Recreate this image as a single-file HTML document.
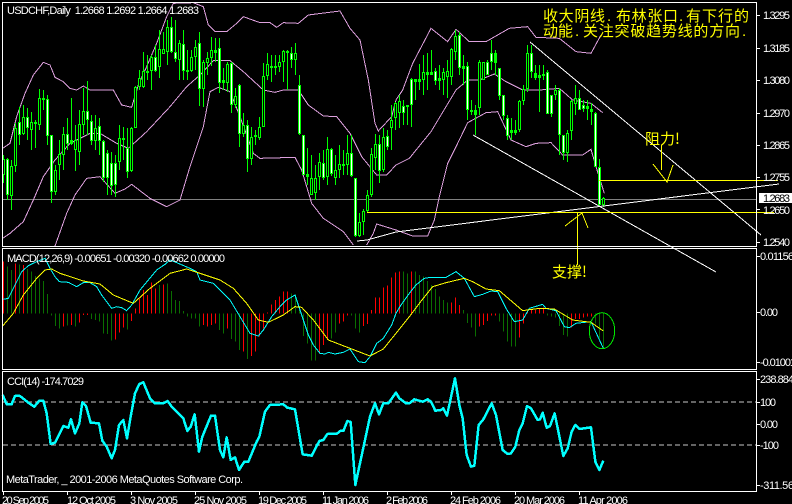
<!DOCTYPE html>
<html><head><meta charset="utf-8">
<style>
html,body{margin:0;padding:0;background:#000;width:792px;height:504px;overflow:hidden}
svg{display:block}
text{font-family:"Liberation Sans",sans-serif;font-size:11px;fill:#fff}
.c{font-family:"WenQuanYi Zen Hei","Noto Sans CJK SC",sans-serif;font-size:15px;fill:#ff0}
.d{font-size:15px;fill:#ff0}
.l{fill:none;stroke-width:3}
</style></head><body>
<svg width="792" height="504" viewBox="0 0 792 504" shape-rendering="crispEdges">
<rect width="792" height="504" fill="#000"/>

<!-- grey price line -->
<path d="M3 199.5H756" stroke="#808080" fill="none"/>

<!-- MACD histogram -->
<g transform="translate(0,245) scale(.33333)" fill="none" stroke-width="3">
<path stroke="#ff0000" d="M10.5 205V50M46.5 205V55M70.5 205V60M190.5 205V245M214.5 205V240M238.5 205V232M250.5 205V210M262.5 205V210M346.5 205V283M358.5 205V262M370.5 205V248M394.5 205V228M406.5 205V190M418.5 205V160M430.5 205V135M442.5 205V150M454.5 205V113M466.5 205V130M490.5 205V118M610.5 205V240M622.5 205V245M634.5 205V240M646.5 205V235M682.5 205V250M730.5 205V320M754.5 205V333M766.5 205V320M778.5 205V275M790.5 205V250M802.5 205V202M814.5 205V178M826.5 205V165M838.5 205V155M850.5 205V140M862.5 205V140M958.5 205V325M970.5 205V300M982.5 205V285M1018.5 205V235M1030.5 205V230M1042.5 205V212M1090.5 205V243M1102.5 205V237M1114.5 205V195M1126.5 205V158M1138.5 205V158M1150.5 205V128M1162.5 205V122M1174.5 205V97M1186.5 205V82"/>
<path stroke="#0a6e00" d="M22.5 205V65M34.5 205V75M58.5 205V58M82.5 205V72M94.5 205V80M106.5 205V93M118.5 205V100M130.5 205V108M142.5 205V147M154.5 205V212M166.5 205V243M178.5 205V250M202.5 205V242M226.5 205V245M274.5 205V222M286.5 205V225M298.5 205V230M310.5 205V265M322.5 205V267M334.5 205V287M382.5 205V253M478.5 205V120M502.5 205V115M514.5 205V138M526.5 205V165M538.5 205V168M550.5 205V198M562.5 205V215M574.5 205V220M586.5 205V220M598.5 205V245M658.5 205V255M670.5 205V265M694.5 205V282M706.5 205V290M718.5 205V315M742.5 205V342M874.5 205V145M886.5 205V148M898.5 205V195M910.5 205V273M922.5 205V295M934.5 205V347M946.5 205V347M994.5 205V280M1006.5 205V262M1054.5 205V212M1066.5 205V250M1078.5 205V262"/>
</g>
<g transform="translate(396,245) scale(.33333)" fill="none" stroke-width="3">
<path stroke="#ff0000" d="M10.5 205V80M46.5 205V80M166.5 205V172M178.5 205V158M190.5 205V180M250.5 205V245M262.5 205V240M274.5 205V228M286.5 205V212M298.5 205V212M370.5 205V278M382.5 205V235M394.5 205V198M406.5 205V195M418.5 205V195M430.5 205V190M442.5 205V187M526.5 205V248M538.5 205V222M550.5 205V222M562.5 205V217M574.5 205V215M586.5 205V215"/>
<path stroke="#0a6e00" d="M22.5 205V80M34.5 205V85M58.5 205V80M70.5 205V90M82.5 205V95M94.5 205V108M106.5 205V120M118.5 205V132M130.5 205V155M142.5 205V165M154.5 205V172M202.5 205V195M214.5 205V234M226.5 205V248M238.5 205V275M310.5 205V230M322.5 205V260M334.5 205V290M346.5 205V305M358.5 205V305M454.5 205V212M466.5 205V215M478.5 205V218M490.5 205V243M502.5 205V270M514.5 205V275M598.5 205V235M610.5 205V280M622.5 205V310"/>
</g>

<!-- Bollinger bands -->
<g transform="scale(.33333)" class="l" stroke="#dda0dd">
<polyline class="l" points="8,445 30,430 50,350 75,280 100,225 130,187 150,195 165,232 190,245 210,265 230,270 250,258 270,270 340,270 365,315 395,322 415,255 440,200 470,130 500,50 520,10 580,8 610,20 625,75 645,95 680,95 710,70 730,50 780,68 810,68 830,82 850,68 895,70 925,45 1020,33 1050,85 1080,120 1105,240 1125,370 1135,393 1175,350 1188,300 1208,270 1238,190 1293,85 1343,125 1368,88 1408,125 1458,125 1528,85 1583,80 1608,112 1678,115 1728,155 1773,160 1803,105"/>
<polyline class="l" points="8,715 30,700 70,665 100,600 130,530 165,480 210,430 270,400 300,400 350,430 385,445 440,395 510,320 560,260 600,225 640,182 690,182 730,215 790,270 825,277 850,270 895,270 925,315 970,348 1010,350 1050,400 1085,470 1130,525 1160,525 1188,495 1228,475 1293,395 1338,320 1368,270 1403,240 1438,240 1483,222 1518,245 1568,270 1618,270 1678,265 1718,300 1773,310 1808,338"/>
<polyline class="l" points="165,738 200,640 225,585 260,535 300,530 345,580 375,567 395,553 450,595 500,620 540,600 570,500 610,380 630,275 655,262 690,275 720,350 760,460 780,475 885,472 905,510 935,610 970,655 1030,695 1060,735"/>
<polyline class="l" points="1100,735 1120,700 1130,672 1188,690 1238,708 1283,708 1303,660 1318,590 1343,490 1373,430 1403,368 1458,338 1493,335 1533,420 1578,440 1608,430 1653,428 1688,465 1748,465 1773,448 1788,500 1813,580"/>
</g>

<!-- candles -->
<g fill="none">
<path stroke="#00ff00" d="M3.5 155V183M7.5 158V200M11.5 160V210M15.5 123V172M19.5 107V145M23.5 105V135M27.5 108V140M31.5 112V150M35.5 120V148M39.5 89V130M43.5 90V110M47.5 95V145M51.5 135V203M55.5 165V195M59.5 140V180M63.5 127V170M67.5 118V150M71.5 98V145M75.5 125V171M79.5 110V165M83.5 88V135M87.5 81V135M91.5 115V145M95.5 115V150M99.5 118V155M103.5 140V182M107.5 150V195M111.5 152V195M115.5 155V197M119.5 125V170M123.5 127V160M127.5 128V178M131.5 127V172M135.5 86V128M139.5 70V90M143.5 52V88M147.5 55V80M151.5 55V90M155.5 45V72M159.5 30V78M163.5 32V52M167.5 20V65M171.5 17V53M175.5 20V62M179.5 40V80M183.5 30V80M187.5 50V80M191.5 50V72M195.5 40V70M199.5 32V106M203.5 60V107M207.5 52V75M211.5 37V66M215.5 38V62M219.5 38V93M223.5 68V90M227.5 62V92M231.5 62V113M235.5 88V108M239.5 84V147M243.5 113V137M247.5 120V172M251.5 127V165M255.5 130V145M259.5 117V140M263.5 63V127M267.5 53V80M271.5 55V82M275.5 55V75M279.5 55V72M283.5 50V82M287.5 50V90M291.5 47V68M295.5 43V75M299.5 75V135M303.5 135V175M307.5 148V185M311.5 155V195M315.5 165V200M319.5 153V190M323.5 150V180M327.5 137V185M331.5 148V176M335.5 155V185M339.5 145V178M343.5 150V175M347.5 135V175M351.5 135V177M355.5 178V237M359.5 213V237M363.5 209V235M367.5 190V212M371.5 148V197M375.5 134V170M379.5 135V183M383.5 128V172M387.5 130V150M391.5 105V150M395.5 102V130M399.5 95V128M403.5 100V125M407.5 105V125M411.5 78V127M415.5 79V100M419.5 64V90M423.5 55V95M427.5 53V90M431.5 50V75M435.5 68V85M439.5 65V90M443.5 68V95M447.5 60V98M451.5 48V85M455.5 30V60M459.5 32V75M463.5 55V85M467.5 62V120M471.5 100V115M475.5 105V135M479.5 60V115M483.5 62V80M487.5 60V75M491.5 40V70M495.5 50V75M499.5 68V100M503.5 95V120M507.5 115V140M511.5 118V140M515.5 120V135M519.5 100V132M523.5 85V105M527.5 45V92M531.5 45V78M535.5 65V80M539.5 65V112M543.5 65V80M547.5 70V110M551.5 95V117M555.5 85V100M559.5 88V155M563.5 135V160M567.5 130V162M571.5 100V140M575.5 85V115M579.5 90V110M583.5 100V112M587.5 100V120M591.5 103V125M595.5 112V167M599.5 159V206M603.5 197V207"/>
<path stroke="#00ff00" stroke-width="3" d="M3.5 159V175M7.5 159V195M11.5 166V196M15.5 128V166M19.5 122V135M23.5 117V134M27.5 117V128M31.5 122V130M35.5 122V124M39.5 98V125M43.5 98V100M47.5 99V136M51.5 135V192M55.5 170V192M59.5 154V165M63.5 134V155M67.5 134V144M71.5 140V144M75.5 140V150M79.5 124V152M83.5 111V125M87.5 111V120M91.5 121V141M95.5 128V141M99.5 126V141M103.5 141V178M107.5 153V178M111.5 163V186M115.5 163V185M119.5 138V162M123.5 138V140M127.5 148V172M131.5 128V171M135.5 87V128M139.5 78V87M143.5 71V87M147.5 71V73M151.5 57V71M155.5 57V71M159.5 49V67M163.5 49V54M167.5 27V52M171.5 27V52M175.5 52V59M179.5 43V60M183.5 44V71M187.5 70V72M191.5 57V71M195.5 47V57M199.5 43V89M203.5 62V89M207.5 58V63M211.5 50V58M215.5 50V53M219.5 48V83M223.5 80V83M227.5 64V83M231.5 63V105M235.5 96V105M239.5 85V134M243.5 125V134M247.5 125V159M251.5 137V159M255.5 135V137M259.5 127V138M263.5 76V127M267.5 64V76M271.5 66V68M275.5 66V68M279.5 62V67M283.5 51V62M287.5 51V53M291.5 53V60M295.5 53V60M299.5 85V134M303.5 135V175M307.5 174V177M311.5 178V195M315.5 178V193M319.5 162V177M323.5 163V178M327.5 149V177M331.5 149V174M335.5 170V178M339.5 164V170M343.5 164V166M347.5 153V165M351.5 153V176M355.5 178V236M359.5 222V236M363.5 211V222M367.5 195V211M371.5 154V195M375.5 144V158M379.5 144V171M383.5 137V170M387.5 136V147M391.5 120V128M395.5 103V118M399.5 101V113M403.5 106V113M407.5 105V107M411.5 79V105M415.5 79V82M419.5 79V82M423.5 72V80M427.5 72V75M431.5 72V75M435.5 71V81M439.5 78V81M443.5 72V80M447.5 71V77M451.5 49V77M455.5 36V52M459.5 35V68M463.5 66V69M467.5 66V110M471.5 110V112M475.5 110V115M479.5 62V108M483.5 62V80M487.5 62V75M491.5 53V62M495.5 53V63M499.5 68V96M503.5 95V116M507.5 118V136M511.5 130V133M515.5 130V133M519.5 101V130M523.5 89V101M527.5 53V89M531.5 53V72M535.5 73V78M539.5 75V78M543.5 74V76M547.5 72V114M551.5 95V114M555.5 90V95M559.5 90V135M563.5 135V153M567.5 133V153M571.5 101V131M575.5 98V104M579.5 98V110M583.5 105V109M587.5 106V109M591.5 109V112M595.5 113V167M599.5 167V205M603.5 198V205"/>
<path stroke="#ffffff" d="M7.5 160V194M19.5 123V134M27.5 118V127M47.5 100V135M51.5 136V191M67.5 135V143M87.5 112V119M91.5 122V140M99.5 127V140M103.5 142V177M107.5 154V177M111.5 164V185M115.5 164V184M127.5 149V171M155.5 58V70M171.5 28V51M175.5 53V58M183.5 45V70M199.5 44V88M219.5 49V82M231.5 64V104M239.5 86V133M247.5 126V158M291.5 54V59M299.5 86V133M303.5 136V174M323.5 164V177M331.5 150V173M351.5 154V175M355.5 179V235M379.5 145V170M387.5 137V146M403.5 107V112M411.5 80V104M435.5 72V80M459.5 36V67M467.5 67V109M487.5 63V74M491.5 54V61M499.5 69V95M503.5 96V115M507.5 119V135M531.5 54V71M547.5 73V113M551.5 96V113M559.5 91V134M563.5 136V152M579.5 99V109M583.5 106V108M595.5 114V166M599.5 168V204"/>
<path stroke="#000000" d="M3.5 160V174M11.5 167V195M15.5 129V165M23.5 118V133M31.5 123V129M39.5 99V124M55.5 171V191M59.5 155V164M63.5 135V154M75.5 141V149M79.5 125V151M83.5 112V124M95.5 129V140M119.5 139V161M131.5 129V170M135.5 88V127M139.5 79V86M143.5 72V86M151.5 58V70M159.5 50V66M163.5 50V53M167.5 28V51M179.5 44V59M191.5 58V70M195.5 48V56M203.5 63V88M207.5 59V62M211.5 51V57M227.5 65V82M235.5 97V104M243.5 126V133M251.5 138V158M259.5 128V137M263.5 77V126M267.5 65V75M279.5 63V66M283.5 52V61M295.5 54V59M311.5 179V194M315.5 179V192M319.5 163V176M327.5 150V176M335.5 171V177M339.5 165V169M347.5 154V164M359.5 223V235M363.5 212V221M367.5 196V210M371.5 155V194M375.5 145V157M383.5 138V169M391.5 121V127M395.5 104V117M399.5 102V112M423.5 73V79M443.5 73V79M447.5 72V76M451.5 50V76M455.5 37V51M479.5 63V107M483.5 63V79M519.5 102V129M523.5 90V100M527.5 54V88M555.5 91V94M567.5 134V152M571.5 102V130M575.5 99V103M603.5 199V204"/>
</g>

<!-- MACD lines -->
<g transform="translate(0,245) scale(.33333)">
<polyline class="l" stroke="#00ffff" points="10,163 25,160 45,120 65,80 85,62 110,50 135,40 150,70 165,95 178,110 205,112 230,125 250,113 270,113 290,125 305,150 335,190 350,185 365,188 380,197 395,180 420,135 445,105 470,75 495,58 510,45 535,55 570,70 590,80 600,105 640,115 665,140 690,165 720,215 750,265 775,273 790,255 815,215 840,185 860,165 885,150 900,195 925,270 940,300 960,325 975,327 985,322 1005,327 1030,322 1050,312 1075,350 1095,353 1110,335 1130,295 1150,280 1175,240 1188,205 1203,180 1228,145 1248,120 1273,100 1293,97 1338,97 1368,80 1393,100 1423,155 1448,148 1473,138 1493,140 1518,190 1543,230 1568,225 1588,190 1628,178 1638,190 1668,197 1693,245 1708,248 1728,235 1773,230 1810,310"/>
<polyline class="l" stroke="#ffff00" points="8,243 40,205 70,150 110,100 135,75 155,72 180,85 250,108 300,117 340,150 400,175 450,130 510,85 560,72 600,85 660,105 700,130 740,175 775,225 805,232 850,210 885,185 905,187 940,225 985,285 1050,310 1110,333 1150,312 1188,265 1228,215 1258,175 1298,125 1338,113 1393,100 1418,110 1458,132 1498,137 1568,197 1618,190 1663,192 1718,225 1773,232 1810,258"/>
</g>
<ellipse cx="602" cy="330.7" rx="12.7" ry="18" fill="none" stroke="#00e800"/>

<!-- CCI -->
<path d="M3 402H756M3 445H756" stroke="#c8c8c8" stroke-dasharray="5 3" fill="none"/>
<g transform="translate(0,370) scale(.33333)">
<polyline fill="none" stroke="#00ffff" stroke-width="7.5" stroke-linejoin="round" points="8,75 20,103 35,103 45,78 60,78 85,98 103,110 118,92 130,92 140,130 152,222 165,218 190,168 205,173 213,148 225,190 238,160 247,97 258,108 272,158 297,160 307,212 320,230 335,265 345,240 357,165 370,150 381,205 392,140 405,70 418,42 430,37 450,85 465,100 490,100 503,93 515,110 550,145 562,183 572,170 584,133 597,245 607,200 633,137 645,137 660,240 670,262 680,202 692,270 705,262 717,300 733,275 745,275 770,215 778,200 795,125 810,105 850,103 862,113 885,118 908,253 935,257 958,213 970,210 982,192 1010,192 1020,183 1030,183 1042,153 1052,156 1066,345 1110,140 1125,100 1137,133 1150,100 1165,100 1188,68 1198,85 1218,100 1228,100 1243,88 1268,95 1283,88 1293,95 1306,122 1323,120 1330,115 1341,137 1365,25 1378,105 1388,145 1400,255 1413,290 1423,287 1436,165 1450,148 1475,100 1488,135 1508,240 1523,252 1533,250 1546,230 1558,180 1568,160 1581,108 1593,115 1613,150 1620,148 1628,128 1640,173 1650,168 1664,130 1690,258 1703,235 1715,185 1726,165 1738,177 1773,172 1786,275 1798,300 1810,272"/>
</g>

<!-- annotation lines -->
<g fill="none">
<path stroke="#ffffff" d="M357 241L367 240L396 232L779 184"/>
<path stroke="#ffffff" d="M530 42L761 235"/>
<path stroke="#ffffff" d="M473 135L716 272"/>
<path stroke="#ffff00" d="M367 212.5H774M599 180.5H778"/>
<path stroke="#ffff00" d="M577.5 213V265M565 226L582 213L588 228M661.5 145V170M653 164L667 182L673 165"/>
</g>

<!-- panel frames -->
<g fill="none" stroke="#ffffff">
<path d="M2.5 2.5H756.5V246.5H2.5Z"/>
<path d="M2.5 248.5H756.5V369.5H2.5Z"/>
<path d="M2.5 371.5H756.5V491.5H2.5Z"/>
<path d="M757 15.5H760M757 48.5H760M757 80.5H760M757 113.5H760M757 145.5H760M757 177.5H760M757 209.5H760M757 242.5H760M757 256.5H760M757 312.5H760M757 362.5H760M757 379.5H760M757 402.5H760M757 424.5H760M757 445.5H760M757 485.5H760"/>
<path d="M3.5 492V495M67.5 492V495M131.5 492V495M195.5 492V495M259.5 492V495M323.5 492V495M387.5 492V495M451.5 492V495M515.5 492V495M579.5 492V495"/>
</g>

<g shape-rendering="auto">
<text x="7" y="14" textLength="192" xml:space="preserve">USDCHF,Daily  1.2668 1.2692 1.2664 1.2683</text>
<text x="7" y="262" textLength="218">MACD(12,26,9) -0.00651 -0.00320 -0.00662 0.00000</text>
<text x="7" y="385" textLength="77">CCI(14) -174.7029</text>
<text x="6" y="483" textLength="237">MetaTrader, _ 2001-2006 MetaQuotes Software Corp.</text>

<text x="763" y="19" textLength="27">1.3295</text>
<text x="763" y="52" textLength="27">1.3185</text>
<text x="763" y="84" textLength="27">1.3080</text>
<text x="763" y="117" textLength="27">1.2970</text>
<text x="763" y="149" textLength="27">1.2865</text>
<text x="763" y="181" textLength="27">1.2755</text>
<text x="763" y="214" textLength="27">1.2650</text>
<text x="763" y="246" textLength="27">1.2540</text>
<rect x="759" y="193" width="33" height="10" fill="#fff" shape-rendering="crispEdges"/>
<text x="763" y="202" textLength="27" style="fill:#000">1.2683</text>

<text x="760" y="260" textLength="34">0.01156</text>
<text x="760" y="316" textLength="18">0.00</text>
<text x="760" y="366" textLength="36">-0.01001</text>
<text x="760" y="383" textLength="34">238.884</text>
<text x="760" y="406" textLength="16">100</text>
<text x="760" y="428" textLength="18">0.00</text>
<text x="760" y="449" textLength="19">-100</text>
<text x="760" y="489" textLength="34">-311.56</text>

<text x="2" y="504" textLength="47">20 Sep 2005</text>
<text x="67" y="504" textLength="49">12 Oct 2005</text>
<text x="130" y="504" textLength="48">3 Nov 2005</text>
<text x="194" y="504" textLength="53">25 Nov 2005</text>
<text x="258" y="504" textLength="49">19 Dec 2005</text>
<text x="322" y="504" textLength="47">11 Jan 2006</text>
<text x="386" y="504" textLength="42">2 Feb 2006</text>
<text x="450" y="504" textLength="51">24 Feb 2006</text>
<text x="514" y="504" textLength="51">20 Mar 2006</text>
<text x="578" y="504" textLength="50">11 Apr 2006</text>

<text class="c" x="543" y="21" textLength="62">收大阴线</text>
<text class="d" x="607" y="21">.</text>
<text class="c" x="616" y="21" textLength="62">布林张口</text>
<text class="d" x="679" y="21">.</text>
<text class="c" x="686" y="21" textLength="63">有下行的</text>
<text class="c" x="543" y="36" textLength="30">动能</text>
<text class="d" x="575" y="36">.</text>
<text class="c" x="583" y="36" textLength="157">关注突破趋势线的方向</text>
<text class="d" x="742" y="36">.</text>
<text class="c" x="645" y="144">阻力!</text>
<text class="c" x="552" y="277">支撑!</text>
</g>
</svg>
</body></html>
